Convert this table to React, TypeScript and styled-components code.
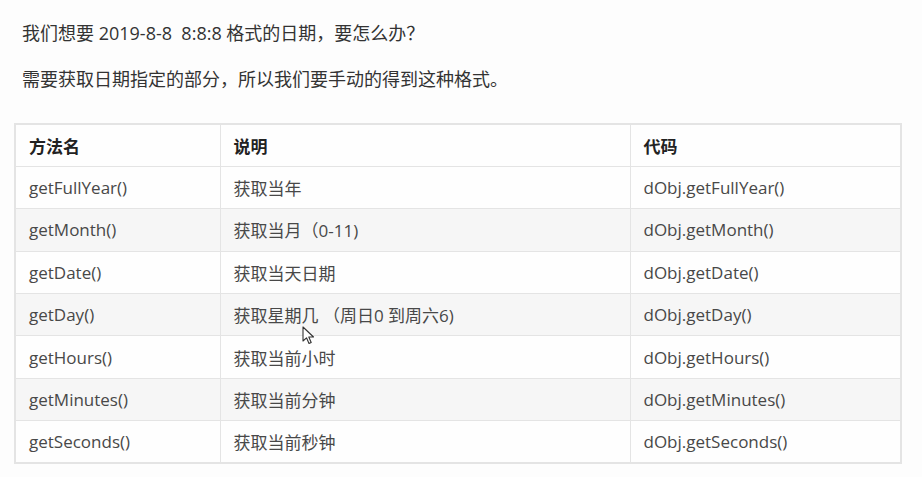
import styled, { createGlobalStyle } from "styled-components";

const GlobalStyle = createGlobalStyle`
  html, body {
    margin: 0;
    padding: 0;
    background: #fdfdfd;
  }
  body {
    font-family: "Open Sans", "Noto Sans CJK SC", sans-serif;
    color: #333;
  }
`;

const Page = styled.div`
  position: relative;
  width: 922px;
  height: 477px;
  overflow: hidden;
  padding-top: 21px;
  box-sizing: border-box;
`;

const Paragraph = styled.p`
  margin: 0 0 22px 22px;
  font-size: 18px;
  line-height: 24px;
  color: #333;
`;

const Table = styled.table`
  margin: 32px 0 0 14px;
  width: 888px;
  border-collapse: collapse;
  table-layout: fixed;
  border: 2px solid #e4e4e4;
  font-size: 17px;
`;

const Row = styled.tr<{ $striped?: boolean }>`
  height: 42.4px;
  background: ${(p) => (p.$striped ? "#f6f6f6" : "#fefefe")};
`;

const HeadCell = styled.th`
  text-align: left;
  font-weight: 700;
  color: #222;
  padding: 0 13px;
  border: 1px solid #e4e4e4;
`;

const Cell = styled.td`
  padding: 0 13px;
  border: 1px solid #e4e4e4;
  color: #484848;
`;

const Cursor = styled.svg`
  position: absolute;
  left: 302px;
  top: 326px;
`;

const rows = [
  ["getFullYear()", "获取当年", "dObj.getFullYear()"],
  ["getMonth()", "获取当月（0-11)", "dObj.getMonth()"],
  ["getDate()", "获取当天日期", "dObj.getDate()"],
  ["getDay()", "获取星期几 （周日0 到周六6)", "dObj.getDay()"],
  ["getHours()", "获取当前小时", "dObj.getHours()"],
  ["getMinutes()", "获取当前分钟", "dObj.getMinutes()"],
  ["getSeconds()", "获取当前秒钟", "dObj.getSeconds()"],
];

export default function App() {
  return (
    <Page>
      <GlobalStyle />
      <Paragraph>我们想要 2019-8-8&nbsp; 8:8:8 格式的日期，要怎么办？</Paragraph>
      <Paragraph>需要获取日期指定的部分，所以我们要手动的得到这种格式。</Paragraph>
      <Table>
        <colgroup>
          <col style={{ width: 205 }} />
          <col style={{ width: 410 }} />
          <col />
        </colgroup>
        <thead>
          <Row>
            <HeadCell>方法名</HeadCell>
            <HeadCell>说明</HeadCell>
            <HeadCell>代码</HeadCell>
          </Row>
        </thead>
        <tbody>
          {rows.map((r, i) => (
            <Row key={r[0]} $striped={i % 2 === 1}>
              <Cell>{r[0]}</Cell>
              <Cell>{r[1]}</Cell>
              <Cell>{r[2]}</Cell>
            </Row>
          ))}
        </tbody>
      </Table>
      <Cursor width="13" height="20" viewBox="0 0 13 20">
        <path
          d="M1 1 L1 15 L4.5 11.8 L7 17.5 L9.2 16.5 L6.8 11 L11.5 11 Z"
          fill="#fff"
          stroke="#333"
          strokeWidth="1.1"
          strokeLinejoin="round"
        />
      </Cursor>
    </Page>
  );
}
